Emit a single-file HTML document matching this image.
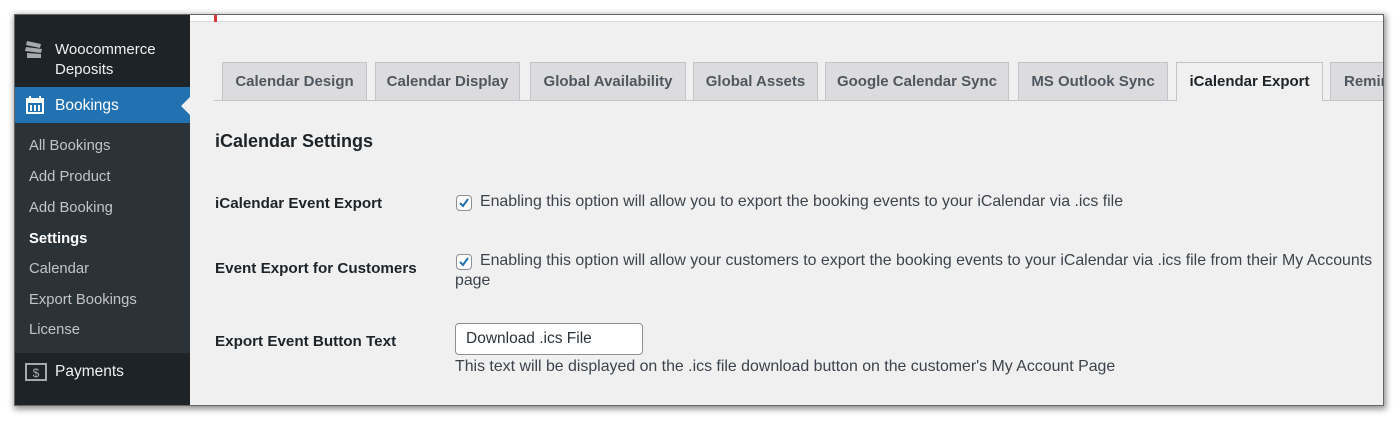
<!DOCTYPE html>
<html><head><meta charset="utf-8"><style>
*{margin:0;padding:0;box-sizing:border-box}
body{width:1400px;height:424px;background:#fff;position:relative;overflow:hidden;font-family:"Liberation Sans",sans-serif;}
#frame{position:absolute;left:15px;top:15px;width:1368px;height:390px;background:#f0f0f1;box-shadow:0 0 0 1px #666,1px 2px 6px 2px rgba(0,0,0,.45);overflow:hidden}
#side{position:absolute;left:0;top:0;width:175px;height:390px;background:#1d2327}
.t{position:absolute;white-space:nowrap}
#sub{position:absolute;left:0;top:108px;width:175px;height:230px;background:#2c3338}
#bk{position:absolute;left:0;top:72px;width:175px;height:38px;background:#2271b1}
.s{position:absolute;left:14px;color:#c3c4c7;font-size:14.8px}
.tab{position:absolute;top:47px;height:38px;background:#dcdcde;border:1px solid #c3c4c7;border-bottom:none;color:#50575e;font-weight:bold;font-size:15px;line-height:38px;text-align:center}
.lab{position:absolute;left:200px;font-weight:bold;font-size:15.2px;color:#1d2327}
.txt{position:absolute;font-size:15.9px;color:#3c434a}
.cb{position:absolute;left:441px;width:16px;height:16px;border:1px solid #8c8f94;border-radius:4px;background:#fff}
</style></head><body>
<div id="frame">
<div id="side">
 <div id="bk"></div>
 <div id="sub"></div>
 <svg class="t" style="left:9px;top:24px" width="22" height="20" viewBox="0 0 22 20"><path d="M3 2l14 3-1 4L2 6z M2 8l16 2-1 4L1 12z M3 14l14 1v4H3z" fill="#a7aaad"/></svg>
 <div class="t" style="left:40px;top:25px;color:#f0f0f1;font-size:15px;line-height:20px">Woocommerce<br>Deposits</div>
 <svg class="t" style="left:10px;top:80px" width="20" height="20" viewBox="0 0 20 20"><rect x="2" y="4" width="16" height="14" fill="none" stroke="#fff" stroke-width="2"/><rect x="2" y="4" width="16" height="4" fill="#fff"/><path d="M5 1v5M15 1v5M6 10v6M10 10v6M14 10v6" stroke="#fff" stroke-width="2"/></svg>
 <div class="t" style="left:40px;top:82px;color:#fff;font-size:15.5px">Bookings</div>
 <div class="t" style="left:166px;top:82px;width:0;height:0;border-top:9px solid transparent;border-bottom:9px solid transparent;border-right:9px solid #f0f0f1"></div>
 <div class="s" style="top:123px">All Bookings</div>
 <div class="s" style="top:154px">Add Product</div>
 <div class="s" style="top:185px">Add Booking</div>
 <div class="s" style="top:216px;color:#fff;font-weight:bold">Settings</div>
 <div class="s" style="top:246px">Calendar</div>
 <div class="s" style="top:277px">Export Bookings</div>
 <div class="s" style="top:307px">License</div>
 <svg class="t" style="left:10px;top:347px" width="22" height="20" viewBox="0 0 22 20"><rect x="1" y="2" width="20" height="16" fill="none" stroke="#a7aaad" stroke-width="2"/><text x="11" y="15" font-size="12" fill="#a7aaad" text-anchor="middle" font-family="Liberation Sans">$</text></svg>
 <div class="t" style="left:40px;top:348px;color:#f0f0f1;font-size:15.5px">Payments</div>
</div>
<div class="t" style="left:175px;top:0;width:1193px;height:7px;background:#fff;border-bottom:1px solid #dcdcde"></div>
<div class="t" style="left:199px;top:0;width:3px;height:7px;background:#d63638"></div>
<div class="t" style="left:199px;top:85px;width:1169px;height:1px;background:#c3c4c7"></div>
<div class="tab" style="left:207px;width:145px">Calendar Design</div>
<div class="tab" style="left:360px;width:145px">Calendar Display</div>
<div class="tab" style="left:515px;width:156px">Global Availability</div>
<div class="tab" style="left:678px;width:125px">Global Assets</div>
<div class="tab" style="left:810px;width:184px">Google Calendar Sync</div>
<div class="tab" style="left:1003px;width:150px">MS Outlook Sync</div>
<div class="tab" style="left:1161px;width:147px;height:39px;background:#f0f0f1;color:#1d2327">iCalendar Export</div>
<div class="tab" style="left:1315px;width:80px;text-align:left;padding-left:13px">Reminders</div>
<div class="t" style="left:200px;top:116px;font-size:18px;font-weight:bold;color:#1d2327">iCalendar Settings</div>
<div class="lab" style="top:180px">iCalendar Event Export</div>
<div class="cb" style="top:180px"><svg width="14" height="14" viewBox="0 0 14 14"><path d="M3 7l3 3 5-7" fill="none" stroke="#2271b1" stroke-width="2"/></svg></div>
<div class="txt" style="left:465px;top:178px">Enabling this option will allow you to export the booking events to your iCalendar via .ics file</div>
<div class="lab" style="top:245px">Event Export for Customers</div>
<div class="cb" style="top:239px"><svg width="14" height="14" viewBox="0 0 14 14"><path d="M3 7l3 3 5-7" fill="none" stroke="#2271b1" stroke-width="2"/></svg></div>
<div class="txt" style="left:465px;top:237px">Enabling this option will allow your customers to export the booking events to your iCalendar via .ics file from their My Accounts</div>
<div class="txt" style="left:440px;top:257px">page</div>
<div class="lab" style="top:318px">Export Event Button Text</div>
<div class="t" style="left:440px;top:308px;width:188px;height:32px;background:#fff;border:1px solid #8c8f94;border-radius:4px;font-size:15.5px;color:#2c3338;padding:6px 10px">Download .ics File</div>
<div class="txt" style="left:440px;top:343px">This text will be displayed on the .ics file download button on the customer's My Account Page</div>
</div>
</body></html>
